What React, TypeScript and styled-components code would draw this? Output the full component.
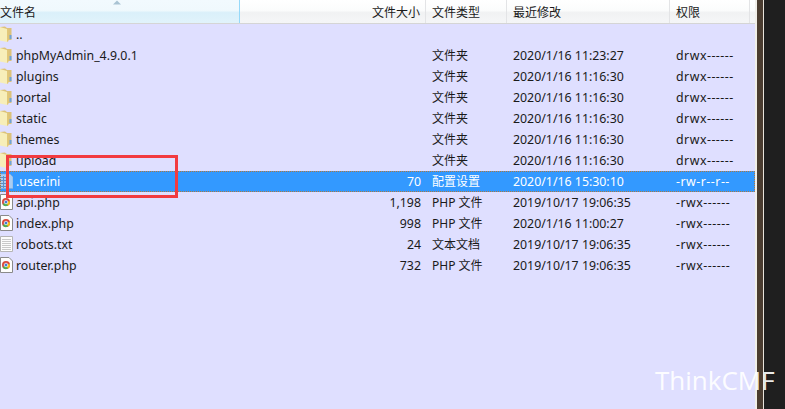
import styled, { createGlobalStyle } from "styled-components";

const GlobalStyle = createGlobalStyle`
  html, body {
    margin: 0;
    padding: 0;
    width: 785px;
    height: 409px;
    overflow: hidden;
    background: #1f1f1f;
  }
`;

const Screen = styled.div`
  position: relative;
  display: flex;
  width: 785px;
  height: 409px;
  overflow: hidden;
  font-family: "Noto Sans", "Noto Sans CJK SC", sans-serif;
  font-size: 12.35px;
  color: #1a1a1a;
`;

const Pane = styled.div`
  width: 755px;
  display: flex;
  flex-direction: column;
  background: #dfdfff;
`;

const Divider = styled.div`
  width: 9px;
  background: #4a3c30;
  border-left: 2px solid #f1efe9;
  border-right: 1px solid #e8e4dc;
  box-sizing: border-box;
`;

const Header = styled.div`
  display: grid;
  grid-template-columns: 240px 186px 81px 163px 80px;
  height: 24px;
  box-sizing: border-box;
  border-bottom: 1px solid #d5d5d5;
  background: linear-gradient(#ffffff 0%, #fbfcfc 45%, #f1f2f3 55%, #f5f6f7 100%);
  font-family: "Noto Sans CJK SC", sans-serif;
  font-size: 12px;
`;

const HeaderCell = styled.div<{ $sorted?: boolean; $right?: boolean; $pad: number }>`
  position: relative;
  display: flex;
  align-items: center;
  justify-content: ${({ $right }) => ($right ? "flex-end" : "flex-start")};
  box-sizing: border-box;
  height: 23px;
  padding: ${({ $right, $pad }) => ($right ? `0 ${$pad}px 0 0` : `0 0 0 ${$pad}px`)};
  border-right: 1px solid ${({ $sorted }) => ($sorted ? "#96d9f9" : "#e3e4e6")};
  background: ${({ $sorted }) =>
    $sorted ? "linear-gradient(#f2fafe 0%, #f0f9fd 45%, #daf0fa 55%, #e1f3fb 100%)" : "transparent"};
`;

const SortArrow = styled.svg`
  position: absolute;
  left: 113px;
  top: 0;
`;

const Rows = styled.div`
  display: flex;
  flex-direction: column;
`;

const Row = styled.div<{ $selected?: boolean }>`
  display: grid;
  grid-template-columns: 421px 92px 163px 79px;
  align-items: center;
  height: 21px;
  padding-bottom: 1px;
  box-sizing: border-box;
  color: ${({ $selected }) => ($selected ? "#ffffff" : "#1a1a1a")};
  background: ${({ $selected }) => ($selected ? "#3399ff" : "transparent")};
  outline: ${({ $selected }) => ($selected ? "1px dotted #b0783c" : "none")};
  outline-offset: -1px;
`;

const NameCell = styled.div`
  display: flex;
  align-items: center;
  gap: 3px;
  white-space: nowrap;
`;

const IconBox = styled.span`
  display: flex;
  width: 13px;
  height: 16px;
  margin: 2px 0;
  flex: none;
`;

const NameText = styled.span`
  flex: 1;
`;

const SizeText = styled.span`
  margin-left: auto;
`;

const TypeCell = styled.div`
  padding-left: 11px;
  font-size: 12px;
`;

const Cell = styled.div`
  white-space: nowrap;
`;

const PermCell = styled(Cell)`
  letter-spacing: 0.5px;
`;

const Highlight = styled.div`
  position: absolute;
  left: 6px;
  top: 155px;
  width: 172px;
  height: 43px;
  box-sizing: border-box;
  border: 3px solid #f23b40;
`;

const Watermark = styled.div`
  position: absolute;
  left: 655px;
  top: 362px;
  font-family: "Open Sans", sans-serif;
  font-size: 26px;
  color: rgba(255, 255, 255, 0.92);
`;

const FolderIcon = () => (
  <svg width="13" height="16" viewBox="0 0 13 16">
    <path d="M0 1 L5 0.5 L7 2 H11.5 V14 H0 Z" fill="#dcc27a" />
    <path d="M0 1 L7 3 V16 L0 14.5 Z" fill="#f7eeb9" />
    <path d="M7 3 H8.5 V15 L7 16 Z" fill="#e2c877" />
    <rect x="9.5" y="9" width="2" height="4" fill="#6fa3d8" />
  </svg>
);

const PhpIcon = () => (
  <svg width="13" height="16" viewBox="0 0 13 16">
    <path d="M0.5 0.5 H9 L12.5 4 V15.5 H0.5 Z" fill="#fdfdfd" stroke="#8a8a8a" />
    <circle cx="6" cy="8" r="4" fill="#d9483b" />
    <path d="M6 8 L2.6 10.2 A4 4 0 0 0 8 11.5 Z" fill="#4caf50" />
    <path d="M6 8 L8 11.5 A4 4 0 0 0 9.8 7 Z" fill="#f4c20d" />
    <circle cx="6" cy="8" r="1.8" fill="#3f7fd9" stroke="#fff" strokeWidth="0.7" />
  </svg>
);

const TextIcon = () => (
  <svg width="13" height="16" viewBox="0 0 13 16">
    <path d="M0.5 0.5 H12.5 V15.5 H0.5 Z" fill="#fcfcfc" stroke="#b5b5b5" />
    <path d="M2 3.5 H11 M2 5.5 H11 M2 7.5 H11 M2 9.5 H11 M2 11.5 H11 M2 13.5 H11" stroke="#c9c9c9" />
  </svg>
);

const ConfigIcon = () => (
  <svg width="13" height="16" viewBox="0 0 13 16">
    <path d="M0 1 H10 L13 4 V15.5 H0 Z" fill="#a9cdf2" stroke="#7fa8d6" strokeWidth="0.6" />
    <path d="M0 4.5 H7 M0 7.5 H7 M0 10.5 H7 M0 13.5 H7" stroke="#5c8fc7" />
    <path d="M3.5 3 V15" stroke="#5c8fc7" />
  </svg>
);

type Kind = "folder" | "php" | "txt" | "ini";

const icons: Record<Kind, () => React.JSX.Element> = {
  folder: FolderIcon,
  php: PhpIcon,
  txt: TextIcon,
  ini: ConfigIcon,
};

interface FileEntry {
  name: string;
  kind: Kind;
  size?: string;
  type?: string;
  modified?: string;
  perms?: string;
  selected?: boolean;
}

const files: FileEntry[] = [
  { name: "..", kind: "folder" },
  { name: "phpMyAdmin_4.9.0.1", kind: "folder", type: "文件夹", modified: "2020/1/16 11:23:27", perms: "drwx------" },
  { name: "plugins", kind: "folder", type: "文件夹", modified: "2020/1/16 11:16:30", perms: "drwx------" },
  { name: "portal", kind: "folder", type: "文件夹", modified: "2020/1/16 11:16:30", perms: "drwx------" },
  { name: "static", kind: "folder", type: "文件夹", modified: "2020/1/16 11:16:30", perms: "drwx------" },
  { name: "themes", kind: "folder", type: "文件夹", modified: "2020/1/16 11:16:30", perms: "drwx------" },
  { name: "upload", kind: "folder", type: "文件夹", modified: "2020/1/16 11:16:30", perms: "drwx------" },
  { name: ".user.ini", kind: "ini", size: "70", type: "配置设置", modified: "2020/1/16 15:30:10", perms: "-rw-r--r--", selected: true },
  { name: "api.php", kind: "php", size: "1,198", type: "PHP 文件", modified: "2019/10/17 19:06:35", perms: "-rwx------" },
  { name: "index.php", kind: "php", size: "998", type: "PHP 文件", modified: "2020/1/16 11:00:27", perms: "-rwx------" },
  { name: "robots.txt", kind: "txt", size: "24", type: "文本文档", modified: "2019/10/17 19:06:35", perms: "-rwx------" },
  { name: "router.php", kind: "php", size: "732", type: "PHP 文件", modified: "2019/10/17 19:06:35", perms: "-rwx------" },
];

export default function App() {
  return (
    <Screen>
      <GlobalStyle />
      <Pane>
        <Header>
          <HeaderCell $sorted $pad={0}>
            文件名
            <SortArrow width="8" height="5" viewBox="0 0 8 5">
              <path d="M0 4.5 L4 0.5 L8 4.5 Z" fill="#a9c3d3" />
            </SortArrow>
          </HeaderCell>
          <HeaderCell $right $pad={5}>文件大小</HeaderCell>
          <HeaderCell $pad={6}>文件类型</HeaderCell>
          <HeaderCell $pad={6}>最近修改</HeaderCell>
          <HeaderCell $pad={6}>权限</HeaderCell>
        </Header>
        <Rows>
          {files.map((file) => {
            const Icon = icons[file.kind];
            return (
              <Row key={file.name} $selected={file.selected}>
                <NameCell>
                  <IconBox>
                    <Icon />
                  </IconBox>
                  <NameText>{file.name}</NameText>
                  <SizeText>{file.size}</SizeText>
                </NameCell>
                <TypeCell>{file.type}</TypeCell>
                <Cell>{file.modified}</Cell>
                <PermCell>{file.perms}</PermCell>
              </Row>
            );
          })}
        </Rows>
      </Pane>
      <Divider />
      <Highlight />
      <Watermark>ThinkCMF</Watermark>
    </Screen>
  );
}
